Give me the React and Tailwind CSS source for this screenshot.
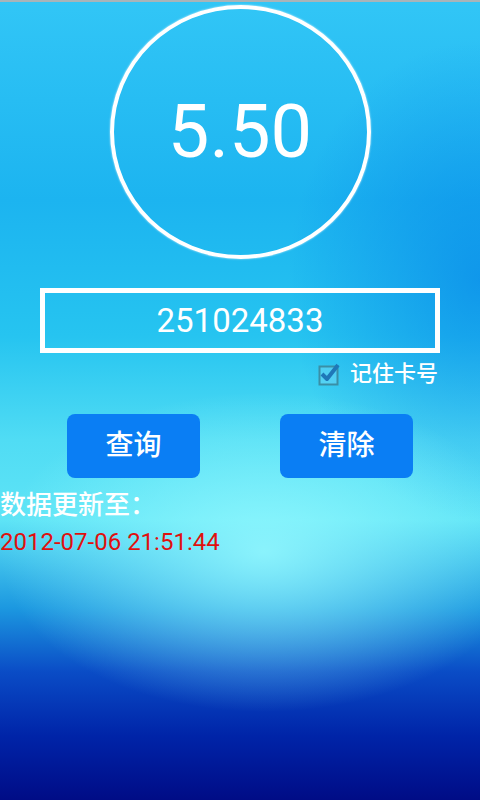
export default function App() {
  return (
    <div className="relative h-[800px] w-[480px] overflow-hidden font-['Roboto','Noto_Sans_CJK_SC',sans-serif] bg-[radial-gradient(ellipse_55%_20%_at_55%_69%,rgba(150,250,255,0.85),rgba(150,250,255,0)_100%),radial-gradient(ellipse_40%_30%_at_100%_35%,rgba(0,120,230,0.55),rgba(0,120,230,0)_100%),linear-gradient(to_bottom,#32c6f6_0%,#1cb4f0_25%,#26c4f0_42%,#50dcf4_55%,#5ee4f6_65%,#1c98e0_76%,#0a4cc6_84%,#0024a8_92%,#000c86_100%)]">
      <div className="h-[2px] bg-[#a9b4b8]" />
      <div className="flex flex-col items-center">
        <div className="mt-[3px] flex h-[254px] w-[261px] items-center justify-center rounded-[50%] border-[4px] border-white shadow-[0_0_2px_rgba(255,255,255,0.8)]">
          <span className="text-[74px] leading-none text-white">5.50</span>
        </div>
        <div className="mt-[29px] flex h-[65px] w-[400px] items-center justify-center border-[5px] border-white">
          <span className="text-[33px] leading-none text-white">251024833</span>
        </div>
        <div className="mt-[9px] flex w-[400px] items-center justify-end gap-[10px] pr-[2px]">
          <svg width="22" height="24" viewBox="0 0 22 24">
            <rect x="1.5" y="4.5" width="18" height="18" fill="rgba(255,255,255,0.15)" stroke="#3a8fa6" strokeWidth="2" />
            <path d="M4 12 L9 17 L20 3" fill="none" stroke="#1f78b8" strokeWidth="4" strokeLinejoin="round" />
          </svg>
          <span className="text-[22px] font-medium leading-none text-white">记住卡号</span>
        </div>
        <div className="mt-[28px] flex w-[480px] justify-between pl-[67px] pr-[67px]">
          <div className="flex h-[64px] w-[133px] items-center justify-center rounded-[8px] bg-[#0a7ef4]">
            <span className="text-[28px] font-medium leading-none text-white">查询</span>
          </div>
          <div className="flex h-[64px] w-[133px] items-center justify-center rounded-[8px] bg-[#0a7ef4]">
            <span className="text-[28px] font-medium leading-none text-white">清除</span>
          </div>
        </div>
      </div>
      <div className="mt-[12px] text-[26px] font-medium leading-[30px] text-white">数据更新至：</div>
      <div className="mt-[8px] text-[24px] leading-[28px] text-[#e0100e]">2012-07-06 21:51:44</div>
    </div>
  );
}
